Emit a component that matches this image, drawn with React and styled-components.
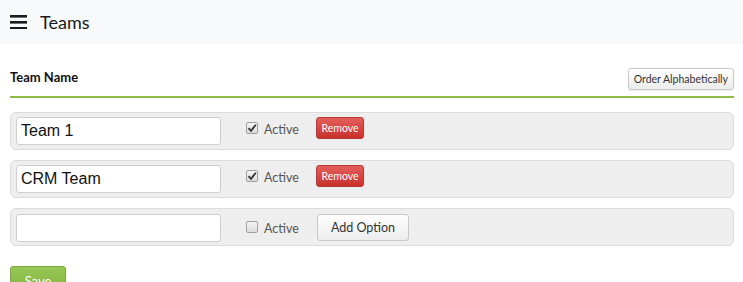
import React from "react";
import styled, { createGlobalStyle } from "styled-components";

const GlobalStyle = createGlobalStyle`
  body {
    margin: 0;
    background: #fff;
    font-family: Lato, "Open Sans", sans-serif;
    color: #222;
  }
`;

const teams = [
  { name: "Team 1", active: true },
  { name: "CRM Team", active: true },
];

function Bars() {
  return (
    <svg width="17" height="14" viewBox="0 0 17 14">
      <rect x="0" y="0" width="17" height="2.6" fill="#1a1a1a" />
      <rect x="0" y="6" width="17" height="2.6" fill="#1a1a1a" />
      <rect x="0" y="12" width="17" height="2.6" fill="#1a1a1a" />
    </svg>
  );
}

function Check({ checked }) {
  return (
    <Box>
      {checked && (
        <svg width="10" height="10" viewBox="0 0 10 10">
          <path d="M1.5 5.2 L4 7.8 L8.8 1.8" fill="none" stroke="#333" strokeWidth="1.8" />
        </svg>
      )}
    </Box>
  );
}

function App() {
  return (
    <>
      <GlobalStyle />
      <TopBar>
        <Bars />
        <Title>Teams</Title>
      </TopBar>
      <Content>
        <ListHead>
          <HeadLabel>Team Name</HeadLabel>
          <SmallButton>Order Alphabetically</SmallButton>
        </ListHead>
        <List>
          {teams.map((t) => (
            <Row key={t.name}>
              <NameInput defaultValue={t.name} />
              <CheckLabel>
                <Check checked={t.active} />
                Active
              </CheckLabel>
              <RemoveButton>Remove</RemoveButton>
            </Row>
          ))}
          <Row $adding>
            <NameInput defaultValue="" />
            <CheckLabel $adding>
              <Check checked={false} />
              Active
            </CheckLabel>
            <AddButton>Add Option</AddButton>
          </Row>
        </List>
        <SaveButton>Save</SaveButton>
      </Content>
    </>
  );
}

const TopBar = styled.div`
  height: 44px;
  background: #f8f9fb;
  display: flex;
  align-items: center;
  padding: 0 10px;
  gap: 13px;
  box-sizing: border-box;
`;

const Title = styled.div`
  font-size: 18px;
  color: #1a1a1a;
  margin-top: -1px;
`;

const Content = styled.div`
  padding: 24px 9px 0 10px;
`;

const ListHead = styled.div`
  display: flex;
  justify-content: space-between;
  align-items: center;
  padding-bottom: 6px;
  border-bottom: 2px solid #8dbd48;
`;

const HeadLabel = styled.div`
  font-size: 13px;
  font-weight: 700;
  color: #111;
  margin-top: -4px;
`;

const SmallButton = styled.button`
  height: 22px;
  padding: 0 5px;
  font-family: Lato, "Open Sans", sans-serif;
  font-size: 10.5px;
  color: #333;
  border: 1px solid #c8c8c8;
  border-radius: 3px;
  background: linear-gradient(#ffffff, #ececec);
  box-shadow: 0 1px 1px rgba(0, 0, 0, 0.08);
`;

const List = styled.div`
  display: flex;
  flex-direction: column;
  gap: 10px;
  margin-top: 14px;
`;

const Row = styled.div`
  display: flex;
  align-items: flex-start;
  height: 38px;
  box-sizing: border-box;
  padding: ${(p) => (p.$adding ? "5px" : "4px")} 5px;
  background: #eeeeee;
  border: 1px solid #dcdcdc;
  border-radius: 6px;
`;

const NameInput = styled.input`
  width: 205px;
  height: 28px;
  box-sizing: border-box;
  border: 1px solid #cfcfcf;
  border-radius: 3px;
  padding: 0 4px;
  font-family: "Liberation Sans", Arial, sans-serif;
  font-size: 16px;
  color: #111;
  background: #fff;
  outline: none;
`;

const CheckLabel = styled.label`
  display: flex;
  align-items: center;
  gap: 6px;
  margin: ${(p) => (p.$adding ? "6px" : "4px")} 0 0 25px;
  height: 16px;
  font-size: 12.5px;
  color: #555;
  width: ${(p) => (p.$adding ? "71px" : "70px")};
`;

const Box = styled.span`
  width: 12px;
  height: 12px;
  margin-top: -3px;
  box-sizing: border-box;
  border: 1px solid #a0a0a0;
  border-radius: 2px;
  background: linear-gradient(#f4f4f4, #dcdcdc);
  display: flex;
  align-items: center;
  justify-content: center;
`;

const RemoveButton = styled.button`
  height: 22px;
  width: 48px;
  padding: 0;
  font-family: Lato, "Open Sans", sans-serif;
  font-size: 10.5px;
  color: #fff;
  border: 1px solid #b83a36;
  border-radius: 3px;
  background: linear-gradient(#e45f5b, #c9302c);
`;

const AddButton = styled.button`
  height: 27px;
  width: 92px;
  padding: 0;
  font-family: Lato, "Open Sans", sans-serif;
  font-size: 12.5px;
  color: #333;
  border: 1px solid #c8c8c8;
  border-radius: 3px;
  background: linear-gradient(#ffffff, #ececec);
`;

const SaveButton = styled.button`
  margin-top: 20px;
  width: 56px;
  height: 30px;
  padding: 0;
  font-family: Lato, "Open Sans", sans-serif;
  font-size: 13px;
  color: #fff;
  border: 1px solid #7da83d;
  border-radius: 3px;
  background: linear-gradient(#96c653, #82b23e);
`;

export default App;
